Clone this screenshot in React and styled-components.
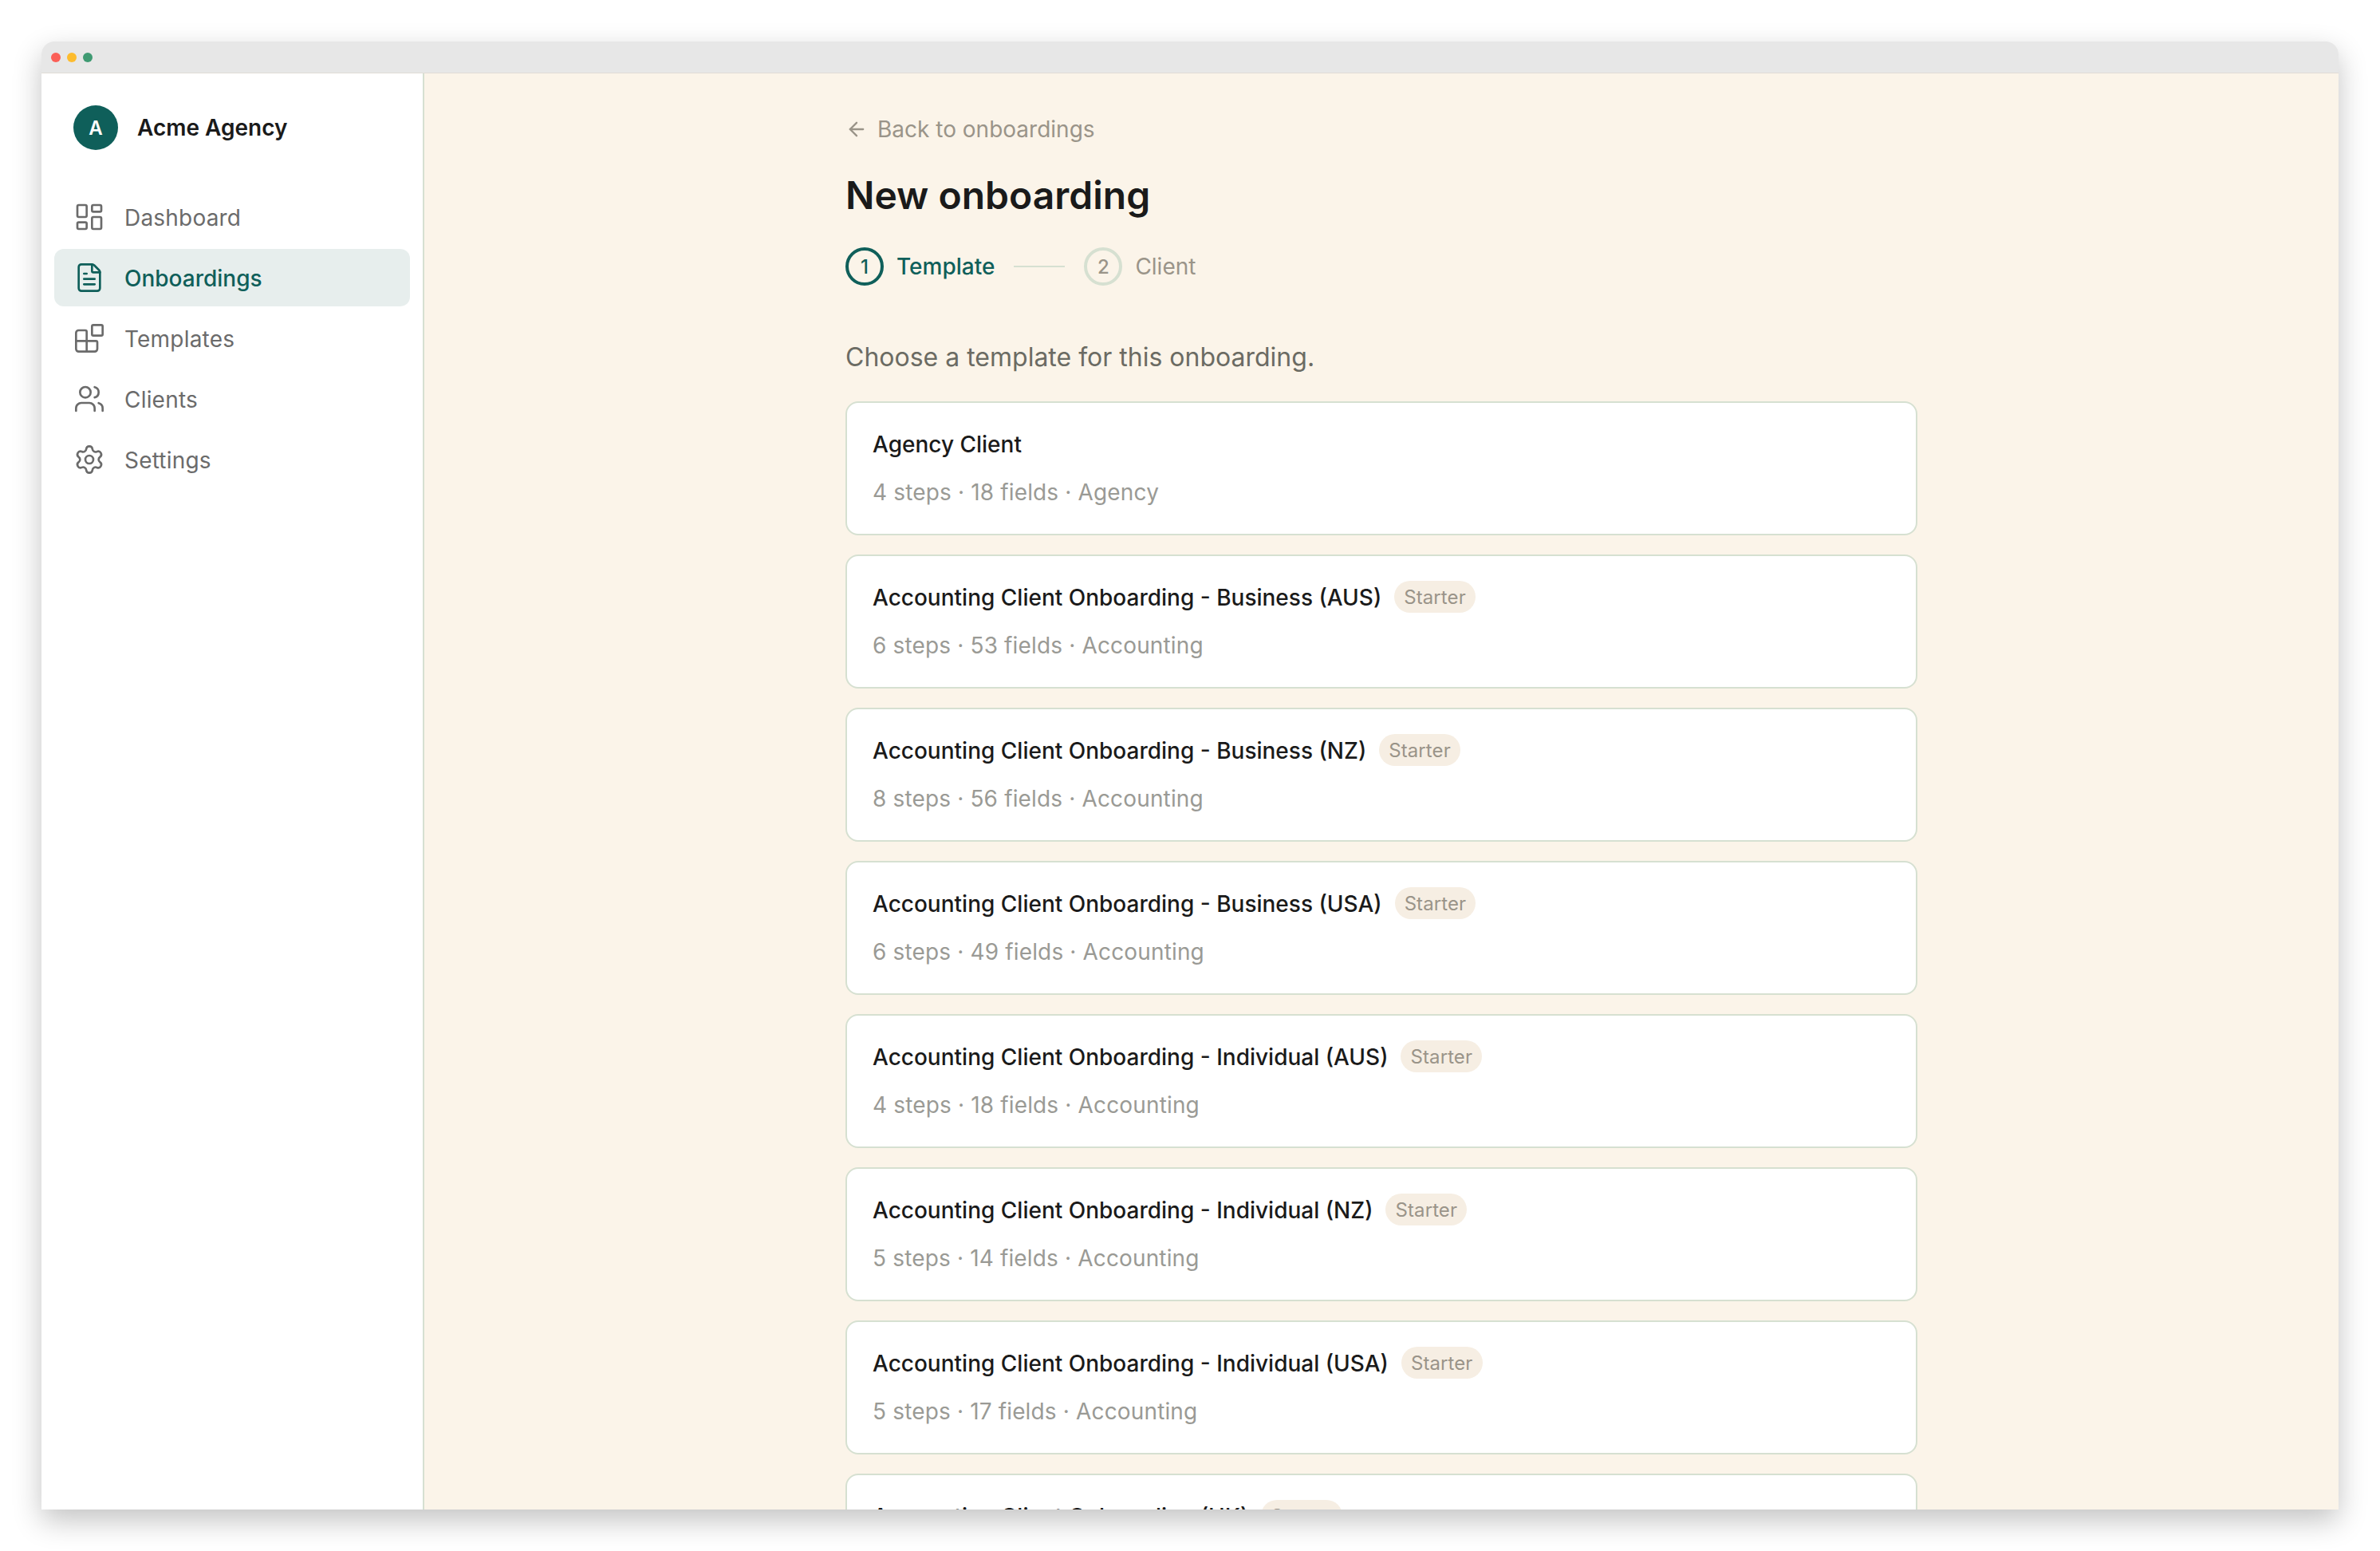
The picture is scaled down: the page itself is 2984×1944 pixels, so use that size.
import React from 'react';
import styled, { createGlobalStyle } from 'styled-components';
import { ArrowLeft, LayoutDashboard, FileText, Blocks, Users, Settings } from 'lucide-react';

const GlobalStyle = createGlobalStyle`
  html, body {
    margin: 0;
    padding: 0;
    height: 100%;
    background: #fff;
    font-family: Inter, "Liberation Sans", sans-serif;
  }
  * { box-sizing: border-box; }
`;

const Page = styled.div`
  width: 2984px;
  height: 1944px;
  padding: 52px 52px 52px;
  overflow: hidden;
`;

const Window = styled.div`
  width: 2880px;
  height: 1840px;
  display: flex;
  flex-direction: column;
  overflow: hidden;
  border-radius: 16px 16px 0 0;
  box-shadow: 0 14px 36px rgba(0, 0, 0, 0.24);
`;

const TitleBar = styled.div`
  height: 40px;
  flex: none;
  display: flex;
  align-items: center;
  gap: 8px;
  padding: 0 12px;
  background: #e7e7e7;
  border-bottom: 1px solid #e0dcd6;
`;

const Dot = styled.span`
  width: 12px;
  height: 12px;
  border-radius: 50%;
  background: ${p => p.$color};
`;

const Body = styled.div`
  flex: 1;
  min-height: 0;
  display: flex;
`;

const Sidebar = styled.aside`
  width: 480px;
  flex: none;
  padding: 40px 16px 0;
  background: #fff;
  border-right: 2px solid #d6e0d1;
`;

const Brand = styled.div`
  display: flex;
  align-items: center;
  gap: 24px;
  padding: 0 24px;
  margin-bottom: 48px;
`;

const Avatar = styled.div`
  width: 56px;
  height: 56px;
  border-radius: 50%;
  background: #0f5f5a;
  color: #fff;
  display: flex;
  align-items: center;
  justify-content: center;
  font-size: 24px;
  font-weight: 600;
`;

const BrandName = styled.div`
  font-size: 28px;
  font-weight: 600;
  color: #1a1a1a;
`;

const Nav = styled.nav`
  display: flex;
  flex-direction: column;
  gap: 4px;
`;

const NavItem = styled.a`
  height: 72px;
  display: flex;
  align-items: center;
  gap: 24px;
  padding: 0 24px;
  border-radius: 12px;
  font-size: 28px;
  letter-spacing: ${p => (p.$active ? 0 : '0.2px')};
  font-weight: ${p => (p.$active ? 500 : 400)};
  color: ${p => (p.$active ? '#0f5f5a' : '#6b6b6b')};
  background: ${p => (p.$active ? '#e7eeed' : 'transparent')};
`;

const NavLabel = styled.span`
  padding-top: 2px;
`;

const Main = styled.main`
  flex: 1;
  min-width: 0;
  background: #fbf4e9;
  padding-top: 52px;
`;

const Column = styled.div`
  width: 1344px;
  margin: 0 auto;
`;

const BackLink = styled.a`
  display: flex;
  align-items: center;
  gap: 12px;
  height: 36px;
  margin-bottom: 33px;
  font-size: 28px;
  color: #9a9489;
`;

const Title = styled.h1`
  margin: 0 0 33px;
  font-size: 48px;
  line-height: 64px;
  font-weight: 600;
  color: #1a1a1a;
`;

const Stepper = styled.div`
  display: flex;
  align-items: center;
  gap: 24px;
  margin-bottom: 66px;
`;

const Step = styled.div`
  display: flex;
  align-items: center;
  gap: 16px;
  font-size: 28px;
  font-weight: ${p => (p.$active ? 500 : 400)};
  color: ${p => (p.$active ? '#0f5f5a' : '#9a9489')};
`;

const StepCircle = styled.span`
  width: 48px;
  height: 48px;
  border-radius: 50%;
  display: flex;
  align-items: center;
  justify-content: center;
  font-size: 24px;
  font-weight: 500;
  border: 4px solid ${p => (p.$active ? '#0f5f5a' : '#d6e0d1')};
`;

const StepLine = styled.span`
  width: 64px;
  height: 2px;
  background: #d6e0d1;
`;

const Lead = styled.p`
  margin: 0 0 31px;
  font-size: 32px;
  line-height: 48px;
  color: #6b6b63;
`;

const List = styled.div`
  display: flex;
  flex-direction: column;
  gap: 24px;
`;

const Card = styled.div`
  height: 168px;
  flex: none;
  padding: 31px 32px;
  background: #fff;
  border: 2px solid #d6e0d1;
  border-radius: 16px;
`;

const CardHead = styled.div`
  display: flex;
  align-items: center;
  gap: 16px;
  height: 40px;
  margin-bottom: 21px;
`;

const CardTitle = styled.div`
  padding-top: 2px;
  font-size: 28px;
  font-weight: 500;
  color: #1a1a1a;
`;

const Badge = styled.span`
  height: 40px;
  padding: 0 12px;
  display: flex;
  align-items: center;
  border-radius: 20px;
  background: #f6eee3;
  font-size: 24px;
  letter-spacing: 0.1px;
  color: #9a9489;
`;

const CardMeta = styled.div`
  font-size: 28px;
  line-height: 40px;
  letter-spacing: 0.15px;
  color: #9a9a95;
`;

const navItems = [
  { label: 'Dashboard', icon: LayoutDashboard },
  { label: 'Onboardings', icon: FileText, active: true },
  { label: 'Templates', icon: Blocks },
  { label: 'Clients', icon: Users },
  { label: 'Settings', icon: Settings },
];

const templates = [
  { name: 'Agency Client', meta: '4 steps · 18 fields · Agency' },
  { name: 'Accounting Client Onboarding - Business (AUS)', meta: '6 steps · 53 fields · Accounting', starter: true },
  { name: 'Accounting Client Onboarding - Business (NZ)', meta: '8 steps · 56 fields · Accounting', starter: true },
  { name: 'Accounting Client Onboarding - Business (USA)', meta: '6 steps · 49 fields · Accounting', starter: true },
  { name: 'Accounting Client Onboarding - Individual (AUS)', meta: '4 steps · 18 fields · Accounting', starter: true },
  { name: 'Accounting Client Onboarding - Individual (NZ)', meta: '5 steps · 14 fields · Accounting', starter: true },
  { name: 'Accounting Client Onboarding - Individual (USA)', meta: '5 steps · 17 fields · Accounting', starter: true },
  { name: 'Accounting Client Onboarding (UK)', starter: true },
];

export default function App() {
  return (
    <Page>
      <GlobalStyle />
      <Window>
        <TitleBar>
          <Dot $color="#fb5f57" />
          <Dot $color="#fdbc2e" />
          <Dot $color="#3f9a72" />
        </TitleBar>
        <Body>
          <Sidebar>
            <Brand>
              <Avatar>A</Avatar>
              <BrandName>Acme Agency</BrandName>
            </Brand>
            <Nav>
              {navItems.map(({ label, icon: Icon, active }) => (
                <NavItem key={label} $active={active}>
                  <Icon size={40} strokeWidth={1.6} />
                  <NavLabel>{label}</NavLabel>
                </NavItem>
              ))}
            </Nav>
          </Sidebar>
          <Main>
            <Column>
              <BackLink>
                <ArrowLeft size={28} strokeWidth={2} />
                Back to onboardings
              </BackLink>
              <Title>New onboarding</Title>
              <Stepper>
                <Step $active>
                  <StepCircle $active>1</StepCircle>
                  Template
                </Step>
                <StepLine />
                <Step>
                  <StepCircle>2</StepCircle>
                  Client
                </Step>
              </Stepper>
              <Lead>Choose a template for this onboarding.</Lead>
              <List>
                {templates.map(t => (
                  <Card key={t.name}>
                    <CardHead>
                      <CardTitle>{t.name}</CardTitle>
                      {t.starter && <Badge>Starter</Badge>}
                    </CardHead>
                    {t.meta && <CardMeta>{t.meta}</CardMeta>}
                  </Card>
                ))}
              </List>
            </Column>
          </Main>
        </Body>
      </Window>
    </Page>
  );
}
